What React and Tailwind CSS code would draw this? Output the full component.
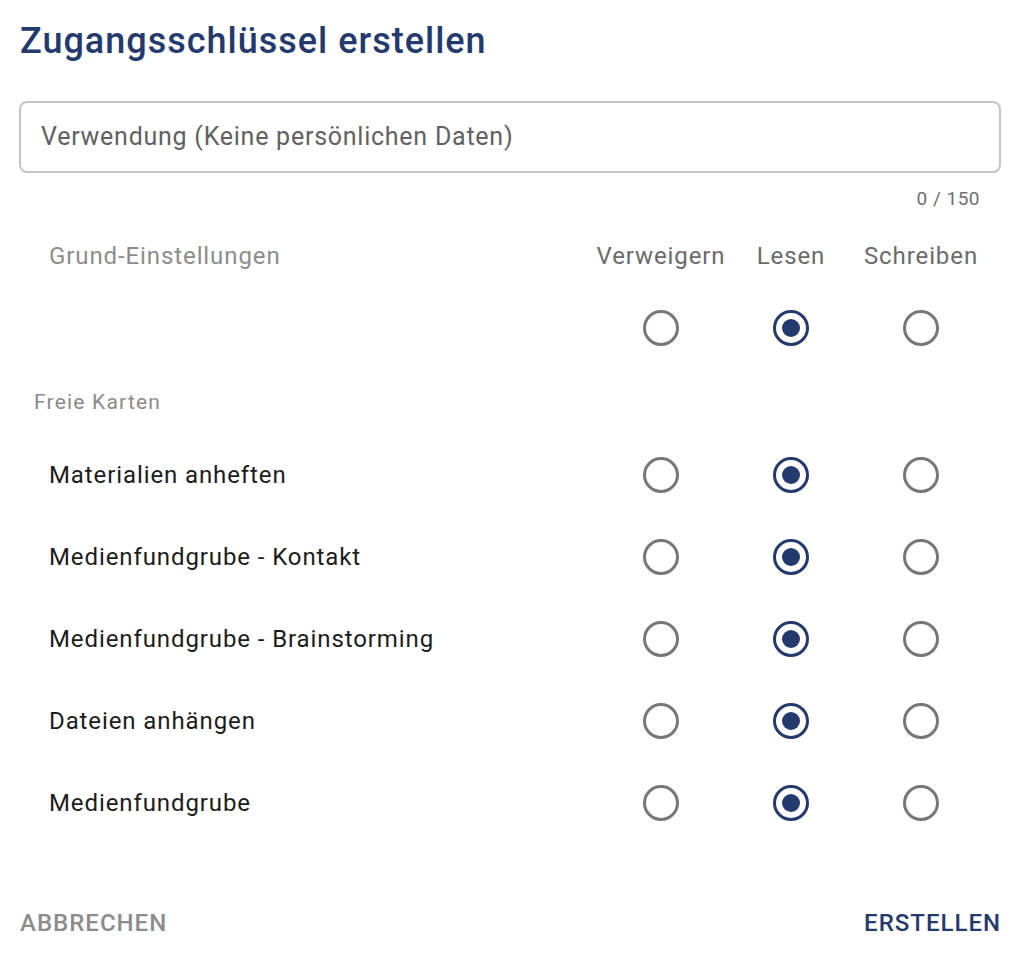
import React, { useState } from 'react';

const navy = 'text-[#243a6e]';

const rows = [
  'Materialien anheften',
  'Medienfundgrube - Kontakt',
  'Medienfundgrube - Brainstorming',
  'Dateien anhängen',
  'Medienfundgrube',
];

const Radio = ({ checked, onClick }) => (
  <button
    onClick={onClick}
    className={`w-[36px] h-[36px] rounded-full border-[3px] flex items-center justify-center ${
      checked ? 'border-[#243a6e]' : 'border-[#777777]'
    }`}
  >
    {checked && <span className="w-[18px] h-[18px] rounded-full bg-[#243a6e]" />}
  </button>
);

const RadioCells = ({ value, onChange }) => (
  <>
    {[0, 1, 2].map((i) => (
      <div key={i} className="flex items-center justify-center">
        <Radio checked={value === i} onClick={() => onChange(i)} />
      </div>
    ))}
  </>
);

const App = () => {
  const [grund, setGrund] = useState(1);
  const [values, setValues] = useState(rows.map(() => 1));

  return (
    <div
      className="bg-white w-[1024px] h-[964px] pl-[19px] pr-[23px] pt-[17px]"
      style={{ fontFamily: 'Roboto, "Liberation Sans", sans-serif' }}
    >
      <h1 className={`text-[36px] leading-[48px] font-medium tracking-[1px] ${navy} pl-px`}>
        Zugangsschlüssel erstellen
      </h1>

      <div className="mt-[36px] h-[72px] border-2 border-[#c4c4c4] rounded-[8px] flex items-center px-[20px]">
        <input
          className="w-full outline-none text-[25px] tracking-[0.75px] text-[#333] placeholder:text-[#616161]"
          placeholder="Verwendung (Keine persönlichen Daten)"
        />
      </div>
      <div className="mt-[14px] h-[24px] flex justify-end pr-[21px] text-[19px] tracking-[0.5px] leading-[24px] text-[#6e6e6e]">
        0 / 150
      </div>

      <div className="mt-[17px] pr-[15px] grid grid-cols-[1fr_130px_130px_130px] text-[24px] tracking-[0.9px]">
        <div className="h-[56px] flex items-center pl-[30px] text-[#8c8c8c]">Grund-Einstellungen</div>
        <div className="h-[56px] flex items-center justify-center text-[#6a6a6a]">Verweigern</div>
        <div className="h-[56px] flex items-center justify-center text-[#6a6a6a]">Lesen</div>
        <div className="h-[56px] flex items-center justify-center text-[#6a6a6a]">Schreiben</div>

        <div className="h-[88px]" />
        <RadioCells value={grund} onChange={setGrund} />

        <div className="col-span-4 h-[62px] flex items-center pl-[15px] text-[21px] tracking-[1.2px] text-[#8a8a8a]">
          Freie Karten
        </div>

        {rows.map((name, r) => (
          <React.Fragment key={name}>
            <div className="h-[82px] flex items-center pl-[30px] text-[#1c1c1c]">{name}</div>
            <RadioCells
              value={values[r]}
              onChange={(v) => setValues((prev) => prev.map((x, j) => (j === r ? v : x)))}
            />
          </React.Fragment>
        ))}
      </div>

      <div className="mt-[55px] h-[48px] flex items-center justify-between">
        <button className="text-[24px] tracking-[1px] font-medium uppercase text-[#8c8c8c] pl-px">Abbrechen</button>
        <button className={`text-[24px] tracking-[1px] font-medium uppercase ${navy}`}>Erstellen</button>
      </div>
    </div>
  );
};

export default App;
